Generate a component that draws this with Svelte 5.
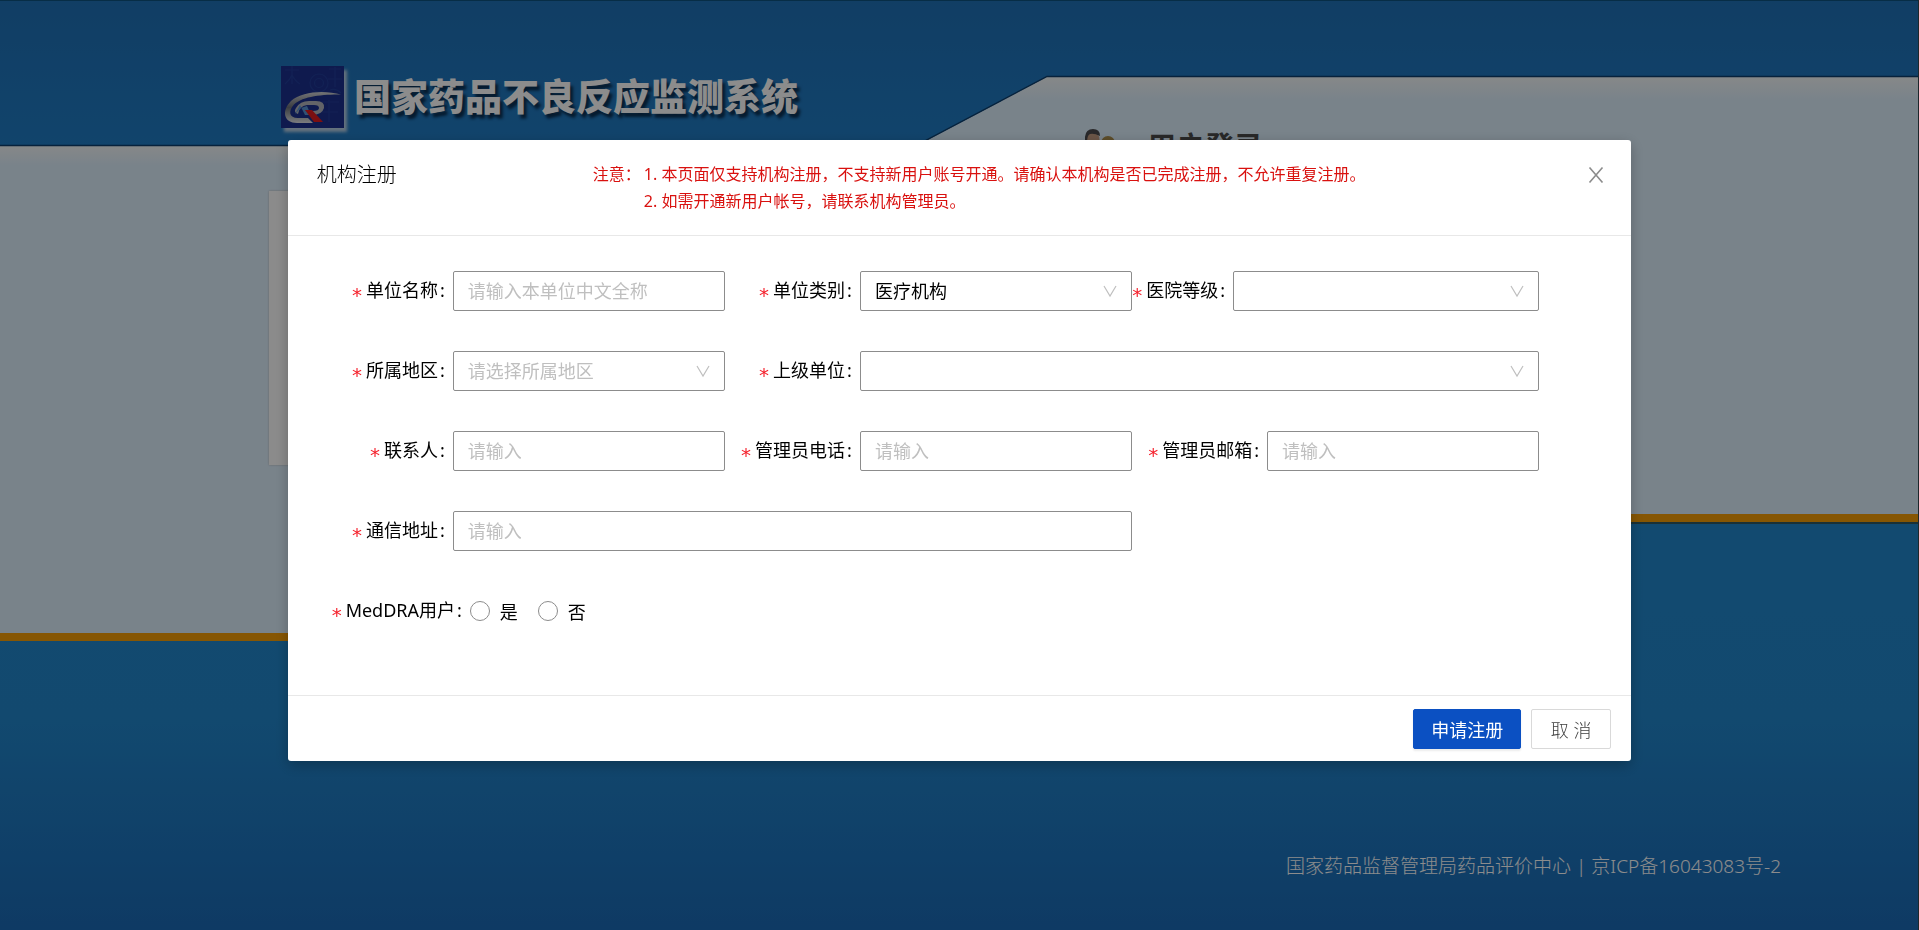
<script>
  let unitName = $state('');
  let unitType = $state('医疗机构');
  let level = $state('');
  let region = $state('');
  let parent = $state('');
  let contact = $state('');
  let phone = $state('');
  let email = $state('');
  let address = $state('');
  let meddra = $state('');
</script>

{#snippet chevron()}
  <svg class="chevron" viewBox="0 0 14 14" aria-hidden="true">
    <path d="M1 2 L7 12 L13 2" fill="none" stroke="currentColor" stroke-width="1.2" />
  </svg>
{/snippet}

<div class="page">
  <svg class="backdrop" viewBox="0 0 1919 930" preserveAspectRatio="xMidYMin slice" aria-hidden="true">
    <defs>
      <linearGradient id="sky" x1="0" y1="0" x2="0" y2="1">
        <stop offset="0" stop-color="#2071b7" />
        <stop offset="1" stop-color="#207dc6" />
      </linearGradient>
      <linearGradient id="deep" x1="0" y1="0" x2="0" y2="1">
        <stop offset="0" stop-color="#2188cd" />
        <stop offset="0.5" stop-color="#2186cb" />
        <stop offset="1" stop-color="#1b6ab6" />
      </linearGradient>
      <linearGradient id="glow" x1="0" y1="0" x2="0" y2="1">
        <stop offset="0" stop-color="#f4f8f8" />
        <stop offset="1" stop-color="#dceefc" />
      </linearGradient>
    </defs>
    <rect width="1919" height="160" fill="url(#sky)" />
    <rect y="500" width="1919" height="430" fill="url(#deep)" />
    <path d="M0 146 H916 L1047 77 H1919 V515 H1400 L1200 634 H0 Z" fill="#dceefc" />
    <rect y="146" width="916" height="20" fill="url(#glow)" />
    <path d="M1047 77 H1919 V101 H1001 Z" fill="url(#glow)" />
    <path d="M0 145.5 H916 L1047 76.5 H1919" fill="none" stroke="#0d3f6e" stroke-width="1.4" />
    <path d="M0 637 H1200 L1400 518 H1919" fill="none" stroke="#f59d06" stroke-width="8" />
    <rect x="1400" y="522" width="519" height="2" fill="#315a63" />
    <rect width="1919" height="1" fill="#0d5280" />
    <rect x="1918" width="1" height="930" fill="#35474f" />
  </svg>

  <header class="brand">
    <svg class="emblem" viewBox="0 0 63 62" role="img" aria-label="CR">
      <defs>
        <linearGradient id="steel" x1="0" y1="0" x2="0" y2="1">
          <stop offset="0" stop-color="#d0d2d6" />
          <stop offset="0.5" stop-color="#6c7078" />
          <stop offset="1" stop-color="#e0e2e6" />
        </linearGradient>
      </defs>
      <rect width="63" height="62" fill="#1c318f" />
      <g fill="none" stroke="#223d9a" stroke-width="1.2">
        <path d="M4 4 h14 M11 0 v18 M4 18 q5 -4 7 -9 q3 6 8 9" />
        <circle cx="38" cy="17" r="9" />
        <circle cx="38" cy="17" r="4.500" />
        <path d="M48 3 h12 M54 1 v20 M47 13 h14 M49 24 q6 -2 11 3" />
        <path d="M38 36 h20 M48 34 v22 M40 46 h17" />
      </g>
      <path d="M60 28.500 C44 24 21 25 10 35 C0 45 3 57 16 57 H32 L27 52 H17 C8 52 7 45 13 38.500 C22 30 42 28.500 60 28.500 Z" fill="url(#steel)" />
      <path d="M15 42 Q19 35 28 35 H35 Q44 35 43 42 Q41 49 31 49 L28 45 H32 Q38 45 38 42 Q38 39 33 39 H26 Q18 40 17 48 Q12 46 15 42 Z" fill="#b4b7bd" />
      <path d="M14 48 L19 39 Q21 43 24 49 L30 49 L26 40 L20 42 Z" fill="#5a94d4" />
      <path d="M24 44 H31 L42 56 H33 Z" fill="#e01c20" />
    </svg>
    <h1>国家药品不良反应监测系统</h1>
  </header>

  <section class="login">
    <svg class="people" viewBox="0 0 34 30" aria-hidden="true">
      <ellipse cx="8" cy="11" rx="6.500" ry="9" fill="#c49c82" />
      <path d="M0 12 Q-1 0 8 0 Q15 0 15 7 Q9 4 5 5 Q2 6 2 14 Z" fill="#4b4a4d" />
      <ellipse cx="23" cy="14" rx="7" ry="7" fill="#a98c4c" />
    </svg>
    <h2>用户登录</h2>
  </section>

  <div class="news"></div>

  <footer class="copyright">国家药品监督管理局药品评价中心 | 京ICP备16043083号-2</footer>
</div>

<div class="mask">
  <div class="modal" role="dialog" aria-modal="true" aria-labelledby="modal-title">
    <div class="modal-head">
      <h3 id="modal-title">机构注册</h3>
      <div class="notice">
        <span>注意：</span>
        <div>
          <p>1. 本页面仅支持机构注册，不支持新用户账号开通。请确认本机构是否已完成注册，不允许重复注册。</p>
          <p>2. 如需开通新用户帐号，请联系机构管理员。</p>
        </div>
      </div>
      <button type="button" class="close" aria-label="关闭">
        <svg viewBox="0 0 16 16" aria-hidden="true">
          <path d="M1.500 0.500 L14.500 15.500 M14.500 0.500 L1.500 15.500" fill="none" stroke="currentColor" stroke-width="1.600" />
        </svg>
      </button>
    </div>

    <form id="register" class="form" onsubmit={(e) => e.preventDefault()}>
      <div class="field">
        <label for="unit-name">单位名称</label>
        <div class="control"><input id="unit-name" type="text" placeholder="请输入本单位中文全称" bind:value={unitName} /></div>
      </div>
      <div class="field">
        <label for="unit-type">单位类别</label>
        <div class="control">
          <select id="unit-type" bind:value={unitType}>
            <option value="医疗机构">医疗机构</option>
          </select>
          {@render chevron()}
        </div>
      </div>
      <div class="field tight">
        <label for="level">医院等级</label>
        <div class="control">
          <select id="level" bind:value={level}><option value=""></option></select>
          {@render chevron()}
        </div>
      </div>

      <div class="field">
        <label for="region">所属地区</label>
        <div class="control">
          <select id="region" class:empty={!region} bind:value={region}>
            <option value="">请选择所属地区</option>
          </select>
          {@render chevron()}
        </div>
      </div>
      <div class="field wide">
        <label for="parent">上级单位</label>
        <div class="control">
          <select id="parent" bind:value={parent}><option value=""></option></select>
          {@render chevron()}
        </div>
      </div>

      <div class="field">
        <label for="contact">联系人</label>
        <div class="control"><input id="contact" type="text" placeholder="请输入" bind:value={contact} /></div>
      </div>
      <div class="field">
        <label for="phone">管理员电话</label>
        <div class="control"><input id="phone" type="tel" placeholder="请输入" bind:value={phone} /></div>
      </div>
      <div class="field">
        <label for="email">管理员邮箱</label>
        <div class="control"><input id="email" type="email" placeholder="请输入" bind:value={email} /></div>
      </div>

      <div class="field wide">
        <label for="address">通信地址</label>
        <div class="control"><input id="address" type="text" placeholder="请输入" bind:value={address} /></div>
      </div>

      <div class="field meddra" role="radiogroup" aria-labelledby="meddra-label">
        <span class="label" id="meddra-label">MedDRA用户</span>
        <div class="control radios">
          <label class="radio"><input type="radio" name="meddra" value="yes" bind:group={meddra} />是</label>
          <label class="radio"><input type="radio" name="meddra" value="no" bind:group={meddra} />否</label>
        </div>
      </div>
    </form>

    <div class="modal-foot">
      <button type="submit" form="register" class="btn primary">申请注册</button>
      <button type="button" class="btn">取 消</button>
    </div>
  </div>
</div>

<style>
  :global(body) {
    margin: 0;
    font-family: 'Noto Sans', 'Noto Sans CJK SC', sans-serif;
    font-size: 18px;
    color: #262626;
  }

  h1, h2, h3, p {
    margin: 0;
    font-weight: 400;
  }

  .page {
    position: relative;
    min-height: 100vh;
    overflow: hidden;
    background: #1b6ab6;
  }

  .backdrop {
    position: absolute;
    inset: 0;
    width: 100%;
    height: 100%;
  }

  .brand {
    position: absolute;
    top: 66px;
    left: 281px;
    display: flex;
    align-items: center;
    gap: 10px;
  }

  .emblem {
    width: 63px;
    height: 62px;
    box-shadow: 3px 4px 3px #b9cfe4;
  }

  .brand h1 {
    font-size: 37px;
    line-height: 62px;
    font-weight: 900;
    color: #fff;
    text-shadow: 3px 4px 3px #0a2f52;
  }

  .login {
    position: absolute;
    top: 129px;
    left: 1085px;
    display: flex;
    gap: 28px;
  }

  .people {
    width: 34px;
    height: 30px;
  }

  .login h2 {
    font-size: 29px;
    line-height: 36px;
    font-weight: 700;
    color: #4a4a4a;
  }

  .news {
    position: absolute;
    top: 191px;
    left: 269px;
    width: 600px;
    height: 274px;
    background: #fdfdfd;
    box-shadow: 0 0 2px #b9b9b9;
  }

  .copyright {
    position: absolute;
    right: 138px;
    bottom: 49px;
    line-height: 30px;
    font-size: 19px;
    font-weight: 300;
    color: #fff;
  }

  .mask {
    position: fixed;
    inset: 0;
    display: flex;
    justify-content: center;
    align-items: flex-start;
    padding-top: 140px;
    background: rgba(0, 0, 0, 0.45);
  }

  .modal {
    width: 70%;
    background: #fff;
    border-radius: 3px;
    box-shadow: 0 4px 14px rgba(0, 0, 0, 0.25);
  }

  .modal-head {
    display: flex;
    align-items: flex-start;
    padding: 21px 27px 20px 29px;
    border-bottom: 1px solid #e8e8e8;
  }

  .modal-head h3 {
    flex: 0 0 276px;
    font-size: 20px;
    font-weight: 300;
    line-height: 28px;
    color: #000;
  }

  .notice {
    flex: 1;
    display: flex;
    gap: 3px;
    font-size: 16px;
    line-height: 27px;
    color: #d9110f;
  }

  .close {
    display: flex;
    margin-top: 6px;
    padding: 0;
    border: 0;
    background: none;
    color: #8c8c8c;
  }

  .close svg {
    width: 16px;
    height: 16px;
  }

  .form {
    display: grid;
    grid-template-columns: repeat(3, 1fr);
    row-gap: 40px;
    padding: 35px 92px 64px 30px;
  }

  .field {
    display: flex;
    height: 40px;
  }

  .wide {
    grid-column: span 2;
  }

  .meddra {
    grid-column: 1 / -1;
  }

  .field > label,
  .label {
    flex: 0 0 135px;
    box-sizing: border-box;
    padding-right: 8px;
    text-align: right;
    line-height: 38px;
    white-space: nowrap;
    color: #000;
  }

  .tight > label {
    flex-basis: 101px;
  }

  .label {
    flex-basis: 152px;
  }

  .field > label::before,
  .label::before {
    content: '*';
    display: inline-block;
    margin-right: 4px;
    font-family: 'DejaVu Sans', sans-serif;
    font-size: 20px;
    line-height: 20px;
    vertical-align: -5px;
    color: #f5222d;
  }

  .field > label::after,
  .label::after {
    content: ':';
    margin-left: 2px;
  }

  .control {
    position: relative;
    flex: 1;
    min-width: 0;
  }

  .control input:not([type='radio']),
  .control select {
    box-sizing: border-box;
    width: 100%;
    height: 40px;
    margin: 0;
    padding: 0 14px;
    border: 1px solid #8c8c8c;
    border-radius: 2px;
    background: #fff;
    font: inherit;
    color: #000;
    appearance: none;
  }

  .control input::placeholder {
    color: #bfbfbf;
  }

  .control select.empty {
    color: #bfbfbf;
  }

  .chevron {
    position: absolute;
    top: 13px;
    right: 15px;
    width: 14px;
    height: 14px;
    color: #bfbfbf;
    pointer-events: none;
  }

  .radios {
    display: flex;
    align-items: center;
    gap: 20px;
  }

  .radio {
    display: flex;
    align-items: center;
    gap: 10px;
    color: #000;
  }

  .radio input {
    box-sizing: border-box;
    width: 20px;
    height: 20px;
    margin: 0;
    border: 1px solid #8c8c8c;
    border-radius: 50%;
    background: #fff;
    appearance: none;
  }

  .radio input:checked {
    border: 6px solid #0b50c2;
  }

  .modal-foot {
    display: flex;
    justify-content: flex-end;
    gap: 10px;
    padding: 13px 20px 12px;
    border-top: 1px solid #e8e8e8;
  }

  .btn {
    min-width: 80px;
    height: 40px;
    padding: 0 17px;
    border: 1px solid #d9d9d9;
    border-radius: 2px;
    background: #fff;
    font: inherit;
    font-weight: 300;
    color: #404040;
  }

  .primary {
    border-color: #0b50c2;
    background: #0b50c2;
    font-weight: 400;
    color: #fff;
    box-shadow: 0 2px 2px rgba(0, 0, 0, 0.08);
  }
</style>
